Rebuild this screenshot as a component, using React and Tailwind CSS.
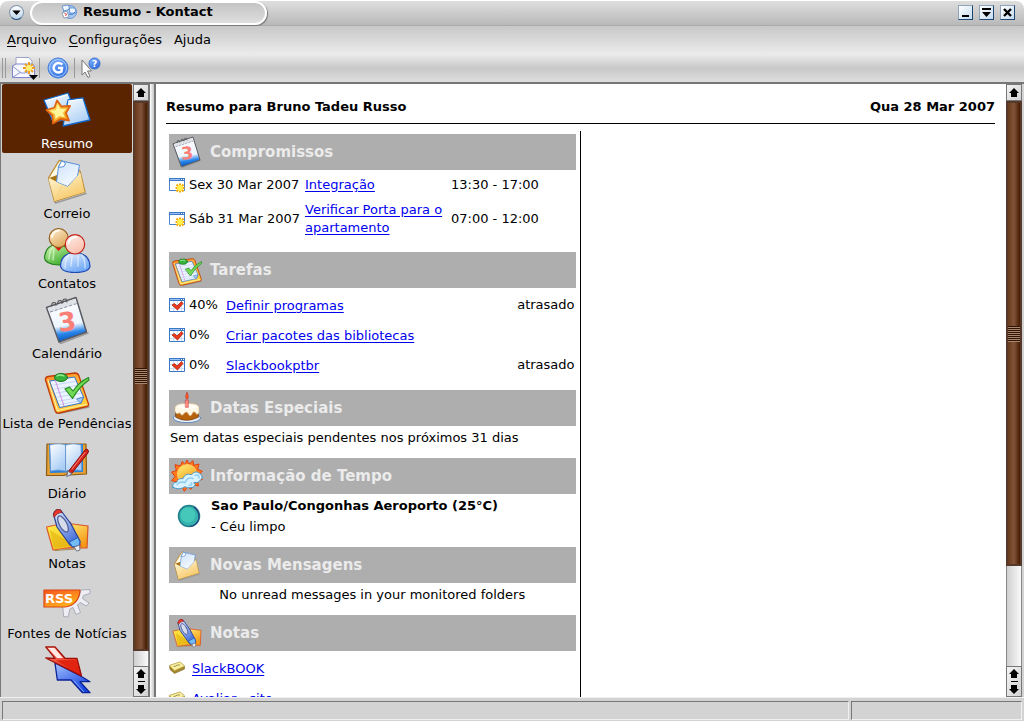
import React from 'react';

const stroke = (color, width = 1) => ({ stroke: color, strokeWidth: width, strokeLinejoin: 'round', strokeLinecap: 'round' });

function Gradients() {
  const list = [
    ['g-sky', '#ffffff', '#a9cdf5'],
    ['g-paper', '#cfe2fb', '#f4f9ff'],
    ['g-env', '#fffbe0', '#f7c765'],
    ['g-gold', '#fff27a', '#f59a17'],
    ['g-skinA', '#fff1d8', '#dfa95c'],
    ['g-skinB', '#fff1ea', '#f9bfae'],
    ['g-green', '#d5f8b8', '#3fae2c'],
    ['g-blue', '#f1f8ff', '#6da7f5'],
    ['g-board', '#ff8a2a', '#ffd23c'],
    ['g-yellow', '#fff04a', '#f3bd1f'],
    ['g-orange', '#f6531f', '#ffb21c'],
    ['g-red', '#ff8d7a', '#dd1503'],
    ['g-arrow', '#a9c4ff', '#1746e0'],
    ['g-pen', '#e9f3ff', '#3d68d8'],
    ['g-google', '#8ab8ff', '#2f6fe0'],
  ];
  return (
    <svg className="absolute size-0" aria-hidden="true">
      <defs>
        {list.map(([id, a, b]) => (
          <linearGradient key={id} id={id} x1="0" y1="0" x2="0.6" y2="1">
            <stop offset="0" stopColor={a} />
            <stop offset="1" stopColor={b} />
          </linearGradient>
        ))}
        <linearGradient id="g-cal" x1="0" y1="0" x2="0.15" y2="1">
          <stop offset="0" stopColor="#ffffff" />
          <stop offset="0.68" stopColor="#eef6ff" />
          <stop offset="0.86" stopColor="#2b86ea" />
          <stop offset="1" stopColor="#0a5fc8" />
        </linearGradient>
      </defs>
    </svg>
  );
}

function Icon({ className, children }) {
  return (
    <svg viewBox="0 0 48 48" fill="none" className={`shrink-0 ${className}`} aria-hidden="true">
      {children}
    </svg>
  );
}

function SummaryIcon({ className }) {
  return (
    <Icon className={className}>
      <path d="M1 14 L25 7 L27 12 L30 32 L10 36Z" fill="url(#g-sky)" {...stroke('#1268c8', 1.3)} />
      <path d="M2.5 15 L24 9" {...stroke('#fff', 1)} />
      <path d="M25 14 L40 12 L47 34 L20 40Z" fill="url(#g-sky)" {...stroke('#1268c8', 1.3)} />
      <path d="M25.5 15 L39 13.2" {...stroke('#fff', 1)} />
      <path d="M14 14.5 L18.5 20.5 L27 20 L23 27 L26 34.5 L17.5 33 L10 37.5 L9.5 29.5 L3.5 24 L11.5 21.5Z" fill="url(#g-gold)" {...stroke('#e0640f', 1.8)} />
      <path d="M14.5 18.500 L17.500 23 L23 23 L20 27 L22 31.500 L16.500 30 L12.500 33 L12 28 L7.500 25 L13 24Z" fill="#fff59a" />
    </Icon>
  );
}

function MailIcon({ className }) {
  return (
    <Icon className={className}>
      <path d="M6.500 23 L12.500 47 L43 37.500" {...stroke('#999', 1.500)} />
      <path d="M5.500 22 L15.500 5.500 Q17 3.500 19 5 L37 15 L42 36 L11.500 45.500Z" fill="url(#g-env)" {...stroke('#b98a35', 1.3)} />
      <path d="M7.500 20.500 L16.500 7 L19 9 L14 21Z" fill="#fffbe6" />
      <path d="M6.500 22 L14 19 L14 26Z" fill="#a77411" />
      <path d="M19 5 L36.500 9 L34.500 20 L24.500 30.500 L13.500 26 L15.500 11Z" fill="url(#g-paper)" {...stroke('#5a92dd', 1)} />
      <path d="M19 5 L22.500 7 L21 10.500 L15.500 11.500Z" fill="#fff" {...stroke('#5d93d8', 1)} />
      <path d="M5.500 22.500 L13.500 26 L24.500 31 L34.500 20 L37.500 17 L41.500 36 L11.500 45Z" fill="url(#g-env)" />
      <path d="M11.500 44.500 L19 30 M41 35.500 L29 27" {...stroke('#f4d489', 1)} />
    </Icon>
  );
}

function ContactsIcon({ className }) {
  return (
    <Icon className={className}>
      <path d="M1.500 32 Q2.500 19 14 18.500 Q27 19 28 32 Q28 39 15 39 Q2 38 1.500 32Z" fill="url(#g-green)" {...stroke('#23831b', 1.2)} />
      <path d="M6 33 Q6 25 10 21 M10 34 L11 23" opacity="0.6" {...stroke('#eaffdc', 1.500)} />
      <path d="M11.500 20.500 L15.500 25 L20 20.500Z" fill="#e01010" />
      <circle cx="15.700" cy="12" r="9.500" fill="url(#g-skinA)" {...stroke('#8d5a18', 1.100)} />
      <path d="M9 11 Q10 5 16 4.500" {...stroke('#fff9ec', 1.800)} />
      <path d="M17.500 40 Q18 27 32 26.500 Q46 27 47 40 Q46.500 46.500 32 46.500 Q18.500 46.500 17.500 40Z" fill="url(#g-blue)" {...stroke('#2049b2', 1.200)} />
      <path d="M22 42 Q22 33 26 29 M28 40 L29 30 M35 40 L35 30 M42 42 Q42 33 39 29" opacity="0.6" {...stroke('#f7fbff', 1.300)} />
      <circle cx="32" cy="18.300" r="9.700" fill="url(#g-skinB)" {...stroke('#c32218', 1.200)} />
      <path d="M25.500 17 Q27 11 33 11" {...stroke('#fff', 1.800)} />
    </Icon>
  );
}

function CalendarIcon({ className }) {
  return (
    <Icon className={className}>
      <path d="M5 13 L17.500 47.500 L45 37" {...stroke('#999', 1.500)} />
      <path d="M3.500 11.500 L33 1.500 L43.500 36 L16 46Z" fill="url(#g-cal)" {...stroke('#5a5a62', 1.500)} />
      <path d="M5 12 L32 3 L33.500 8 L6.500 17Z" fill="#dfe2e8" />
      <path d="M7 16 L34 7.500" stroke="#8c929b" strokeWidth="1" strokeDasharray="3 2" />
      <path d="M9 10 q-1 -4 3 -3.500 l1 3 M15 8 q-1 -4 3 -3.500 l1 3 M20 6.500 q-1 -4 3 -3.500 l1 3" {...stroke('#555', 1.100)} />
      <text x="15" y="35" transform="rotate(-6 23 26)" fontFamily="DejaVu Sans" fontWeight="bold" fontSize="26" fill="#f98078">3</text>
    </Icon>
  );
}

function TodoIcon({ className }) {
  return (
    <Icon className={className}>
      <path d="M4 15 L14 48 L46 41" {...stroke('#9a9a9a', 1.500)} />
      <path d="M2.500 14 Q2 11 5 10.500 L32 7 Q35 7 36 10 L45.500 38 Q46 40 43.500 40.500 L16 47 Q13 47.500 12 44.500Z" fill="url(#g-board)" {...stroke('#c23c09', 1.300)} />
      <path d="M5 14 L14.500 44.500 L43 38.500" {...stroke('#fff0a3', 1.200)} />
      <path d="M7 15 L31.500 11 L40.500 31 L38 37 L17 41.500Z" fill="#edf4ff" {...stroke('#3478cd', 1)} />
      <path d="M11 19 L32 15.500 M12 23 L34 19.500 M13.500 27 L35.500 23.500 M14.500 31 L37 27.500 M16 35 L38 31.500 M17 38.500 L36 35" {...stroke('#b5cef0', 0.800)} />
      <path d="M12.500 15 L21 40" {...stroke('#d88be8', 1)} />
      <path d="M34 33 L40.500 31 L38 37Z" fill="#a6c9f3" {...stroke('#3478cd', 0.800)} />
      <ellipse cx="18" cy="11.500" rx="6.500" ry="4" fill="#36b13b" {...stroke('#167422', 1)} />
      <path d="M14 10 Q17 8 21 10" {...stroke('#9aec94', 1.300)} />
      <path d="M22 23 L26.500 21 L30 25 Q36 16 45.500 11.500 L46 14 Q36 21 29.500 32.500Z" fill="#73d954" {...stroke('#1f8a1e', 1.100)} />
    </Icon>
  );
}

function JournalIcon({ className }) {
  return (
    <Icon className={className}>
      <path d="M4 8 L43 8 L43.500 38 L27 39 L24 38 L21 39.500 L3.500 39.500Z" fill="#e6a136" {...stroke('#8c5c16', 1.200)} />
      <path d="M6 8 L7 37 L23 36.500 L40 36 L40 8Z" fill="#2b83dd" />
      <path d="M7 9 Q16 6.500 22.500 9 L22.500 35 Q15 33 8 35Z" fill="url(#g-sky)" {...stroke('#6c9cd1', 0.800)} />
      <path d="M23 9 Q30 6.500 38 9 L38.500 34.500 Q30 33 23 35Z" fill="url(#g-sky)" {...stroke('#6c9cd1', 0.800)} />
      <path d="M25 36 L42 14 Q44 12 45.500 14.500 L45 17 L29 37Z" fill="#d7201b" {...stroke('#85120f', 1)} />
      <path d="M29 33 L42 16.500" {...stroke('#ff8a7a', 1)} />
      <path d="M25 35 L29 38 L24 40.500Z" fill="#d9dbe5" {...stroke('#6b6f80', 1)} />
    </Icon>
  );
}

function NotesIcon({ className }) {
  return (
    <Icon className={className}>
      <path d="M18 42 L22 17 L45 20 L44 42Z" fill="url(#g-gold)" {...stroke('#d7542a', 1.200)} />
      <path d="M3.500 21 L27 16 L38 40 L10 44Z" fill="url(#g-yellow)" {...stroke('#dd5b2c', 1.200)} />
      <path d="M7 24 L26 36 L34 39 L11 42Z" fill="#dcae08" opacity="0.5" />
      <path d="M12 44.500 L33 43" {...stroke('#a08a4a', 1)} />
      <path d="M10.500 8 Q12.500 2 17.500 4 L28 18 L37 35 L36.500 39 L30.500 41 L27 39 L14 21Z" fill="url(#g-pen)" {...stroke('#293f95', 1.200)} />
      <path d="M10.500 8.500 Q12 2 17.500 4 L19 6.500 Q14 6.500 11.500 11Z" fill="#ec372b" {...stroke('#97201c', 0.900)} />
      <ellipse cx="20" cy="18" rx="3.700" ry="9" transform="rotate(-28 20 18)" fill="#d7dced" {...stroke('#4f5e96', 1.300)} />
      <path d="M26.500 36 L35 31.500 L37 36 L36 39.500 L30 41Z" fill="#72bdf8" {...stroke('#2a59b5', 1)} />
      <path d="M31.500 41 L36.500 39 L37 44 L34 45Z" fill="#eceff6" {...stroke('#778', 1)} />
    </Icon>
  );
}

function RssIcon({ className }) {
  return (
    <Icon className={className}>
      <path d="M20 30 Q36 29 38 14 L47 13.500 L47 17.500 L40.500 19.500 L39.500 22.500 L46 27 L43.500 30 L37 26.500 L34.500 29 L37.500 36.500 L33 38.500 L30 31.500 L27 33 L25 41 L20.500 40.500 L20 33Z" fill="#eeeef4" {...stroke('#a9acb8', 1)} />
      <path d="M1 14 H37 Q36 29 22 31 H1Z" fill="url(#g-orange)" {...stroke('#d94614', 1.200)} />
      <text x="2" y="26.500" fontFamily="DejaVu Sans" fontWeight="bold" fontSize="13" fill="#fff">RSS</text>
    </Icon>
  );
}

function SyncIcon({ className }) {
  return (
    <Icon className={className}>
      <path d="M12 17 L38.500 30.500 L47 35.700 L37 35.700 L47 46.700 L39.500 46.700 L28 34 L14.300 34Z" fill="url(#g-arrow)" {...stroke('#0b2296', 1.300)} />
      <path d="M31 35 L40.500 45.500" {...stroke('#8cacff', 1)} />
      <path d="M2.700 0.900 L12 0.900 L22 12.300 L34 12.300 L38.500 30 L2.700 12 L12 12.300Z" fill="url(#g-red)" {...stroke('#9e0d08', 1.300)} />
      <path d="M5 2 L11.300 2 L20 12 L14 12Z" fill="#ffe8e4" />
      <path d="M13 14.500 L33 14 L37 28Z" fill="#e02410" />
    </Icon>
  );
}

function CakeIcon({ className }) {
  return (
    <Icon className={className}>
      <ellipse cx="24" cy="39" rx="20.500" ry="7" fill="#e9f3ff" {...stroke('#4777b5', 1.200)} />
      <path d="M7 23 L7 38 Q23 47 41 38 L41 23Z" fill="#b8610d" {...stroke('#754009', 1.100)} />
      <path d="M6 23 Q7 17 24 17 Q41 17 42 23 L42 31 Q39 36 36 30 Q33 28 31 34 Q28 38 25 31 Q22 28 19 33 Q16 37 13 31 Q8 35 6 29Z" fill="#fff7e5" {...stroke('#cfb890', 1)} />
      <ellipse cx="24" cy="22" rx="15" ry="3.500" fill="#fffdf5" />
      <path d="M22 12 H26 V23 H22Z" fill="#ff8c80" {...stroke('#c43631', 0.800)} />
      <path d="M24 1 Q28 8 24 11 Q20 8 24 1Z" fill="#ff6426" {...stroke('#cc2419', 1)} />
    </Icon>
  );
}

function WeatherIcon({ className }) {
  return (
    <Icon className={className}>
      <path d="M24 0 L27 6 L33 1 L34 8 L42 6 L40 14 L47 17 L42 22 L47 29 L40 31 L41 39 L34 37 L30 44 L25 40 L20 47 L16 39 L8 42 L9 33 L1 31 L6 25 L1 18 L8 16 L6 7 L14 9 L17 2 L21 7Z" fill="#ff7a1c" {...stroke('#e23c08', 1.400)} />
      <circle cx="24" cy="21" r="14" fill="url(#g-gold)" {...stroke('#ffce65', 2)} />
      <path d="M3 41 Q1 34 9 33 Q10 27 18 28 Q21 19 31 22 Q36 15 43 20 Q50 26 44 30 Q42 35 34 34 Q39 37 33 41 Q24 43 21 40 Q12 46 3 41Z" fill="#d9f2ff" {...stroke('#3a93c8', 1.300)} />
      <path d="M9 37 Q14 31 21 34 Q25 24 33 28 M27 38 Q34 38 30 34 M36 23 Q43 21 42 27" {...stroke('#86cbed', 2)} />
    </Icon>
  );
}

function EventIcon() {
  return (
    <svg viewBox="0 0 16 16" className="size-4" aria-hidden="true">
      <path d="M0.500 1.500 H15.500 V13.500 H0.500Z" fill="#fff" stroke="#4c82cb" />
      <path d="M0 1 H16 V4 H0Z" fill="#3c78c8" />
      <path d="M1 2.500 H11" stroke="#9cc3f4" />
      <path d="M12 2.500 H13 M14 2.500 H15" stroke="#fff" />
      <path d="M11 6.500 V15.500 M6.500 11 H15.500 M7.500 7.500 L14.500 14.500 M14.500 7.500 L7.500 14.500" stroke="#f2a80c" strokeWidth="2" />
      <circle cx="11" cy="11" r="3" fill="#fff04a" />
    </svg>
  );
}

function TaskIcon() {
  return (
    <svg viewBox="0 0 16 16" className="size-4" aria-hidden="true">
      <path d="M0.500 1.500 H15.500 V14.500 H0.500Z" fill="#fff" stroke="#3c78c8" />
      <path d="M0 1 H16 V4 H0Z" fill="#3c78c8" />
      <path d="M1 2.500 H11" stroke="#9cc3f4" />
      <path d="M12 2.500 H13 M14 2.500 H15" stroke="#fff" />
      <path d="M4.500 4 V14 M8.500 4 V14 M12.500 4 V14 M1 7.500 H15 M1 11.500 H15" stroke="#cfdff3" />
      <path d="M3 8 L5.500 6.500 L8 9 L12.500 4.500 L14 6.500 L8.500 13Z" fill="#ea3a1c" stroke="#b82410" strokeWidth="0.800" />
    </svg>
  );
}

function StickyIcon() {
  return (
    <svg viewBox="0 0 16 16" className="size-4 shrink-0" aria-hidden="true">
      <path d="M0.500 4.500 L11 1 L15.500 5 L15.500 8 L5.500 12.500 L1 8.500Z" fill="#a5872c" stroke="#7d6824" strokeWidth="0.600" />
      <path d="M0.500 4.500 L11 1 L15.500 5 L5.500 9.500Z" fill="#f8f0a0" stroke="#cdb958" strokeWidth="0.600" />
      <path d="M4.500 5.500 L7 5 L8 4 L11 4" stroke="#9b935a" fill="none" />
    </svg>
  );
}

const sidebarItems = [
  ['Resumo', SummaryIcon],
  ['Correio', MailIcon],
  ['Contatos', ContactsIcon],
  ['Calendário', CalendarIcon],
  ['Lista de Pendências', TodoIcon],
  ['Diário', JournalIcon],
  ['Notas', NotesIcon],
  ['Fontes de Notícias', RssIcon],
  ['', SyncIcon],
];

function TitleBar() {
  const control = 'flex size-[15px] items-center justify-center border border-[#8fa3bb] border-r-[#1d4672] border-b-[#1d4672] bg-linear-to-br from-white to-[#c5dcf0]';
  return (
    <header className="shrink-0 bg-white pt-px">
      <div className="flex h-[25px] items-start rounded-t-lg border-b border-[#aaa] bg-linear-to-b from-[#dedede] to-[#b9b9b9] px-[9px]">
        <button type="button" aria-label="Menu da janela" className="mt-1 flex size-[15px] items-center justify-center rounded-full border border-[#8296ad] border-b-[#1d4672] bg-linear-to-b from-white to-[#bcd5ec]">
          <svg viewBox="0 0 10 6" className="h-[5px] w-[9px]" aria-hidden="true"><path d="M0 0.500 H10 L5 6Z" /></svg>
        </button>
        <div className="ml-1.5 flex h-[24px] w-[237px] items-center rounded-full border-2 border-white bg-linear-to-b from-[#c4c4c4] to-[#dedede] pb-0.5 pl-[29px] shadow-[1px_1px_1px_#777]">
          <svg viewBox="0 0 16 16" className="mr-1.5 size-4" aria-hidden="true">
            <circle cx="9" cy="8" r="6.500" fill="#a8c9f2" stroke="#6b96d4" />
            <path d="M1 2 L7 1 L9 5 L3 7Z M8 4 L14 4 L15 9 L9 9Z" fill="#eff6ff" stroke="#5688ca" strokeWidth="0.800" />
            <path d="M1 9 L6 7 L8 13 L3 14Z" fill="#fff" stroke="#788ba5" strokeWidth="0.800" />
            <path d="M3.500 9.500 L5.500 10 L4.500 12" stroke="#e44" fill="none" />
            <path d="M8 10 Q12 12 14 8" stroke="#3d78cd" fill="none" />
          </svg>
          <h1 className="text-[13px] leading-5 font-bold">Resumo - Kontact</h1>
        </div>
        <div className="mt-1 ml-auto flex gap-1.5">
          <button type="button" aria-label="Minimizar" className={control}>
            <svg viewBox="0 0 13 13" className="size-[13px]" aria-hidden="true"><path d="M3 9 H10 V11 H3Z" /></svg>
          </button>
          <button type="button" aria-label="Maximizar" className={control}>
            <svg viewBox="0 0 13 13" className="size-[13px]" aria-hidden="true"><path d="M2 2 H11 V4 H2Z M2 6 H11 L6.500 11Z" /></svg>
          </button>
          <button type="button" aria-label="Fechar" className={control}>
            <svg viewBox="0 0 13 13" className="size-[13px]" aria-hidden="true"><path d="M3 3 L10 10 M10 3 L3 10" stroke="#000" strokeWidth="2.400" /></svg>
          </button>
        </div>
      </div>
    </header>
  );
}

function MenuBar() {
  return (
    <nav className="flex h-7 shrink-0 items-center gap-3 bg-linear-to-b from-[#c8c8c8] to-[#ebebeb] pl-[7px]">
      <button type="button"><u className="underline-offset-2">A</u>rquivo</button>
      <button type="button"><u className="underline-offset-2">C</u>onfigurações</button>
      <button type="button">Ajuda</button>
    </nav>
  );
}

function ToolBar() {
  return (
    <div className="flex h-[30px] shrink-0 items-center border-b-2 border-[#777] bg-linear-to-b from-[#ececec] via-[#c8c8c8] to-[#dedede]">
      <div className="ml-0.5 flex gap-0.5" aria-hidden="true">
        <i className="h-5 w-px bg-[#999]" />
        <i className="h-5 w-px bg-[#999]" />
      </div>
      <button type="button" aria-label="Novo" className="ml-1.5">
        <svg viewBox="0 0 26 24" className="h-6 w-[26px]" aria-hidden="true">
          <path d="M4 1.500 H17 L20 5 V16 H4Z" fill="#fff" stroke="#9aa4c8" />
          <path d="M0.500 10 L4 8 H20 L22.500 10 V21.500 H0.500Z" fill="#f6f7ff" stroke="#7f87cc" />
          <path d="M1 10.500 L9 17 H13 L22 10.500 M1 21 L9 16 M22 21 L14 16" fill="none" stroke="#8f98d4" />
          <path d="M17 6 V18 M11 12 H23 M13 8 L21 16 M21 8 L13 16" stroke="#ee9f1c" strokeWidth="2" />
          <circle cx="17" cy="12" r="3" fill="#fff27c" />
          <path d="M17 19 H26 L21.500 24Z" fill="#000" />
        </svg>
      </button>
      <i className="ml-px h-5 w-px bg-[#999]" />
      <button type="button" aria-label="Google" className="ml-[7px]">
        <svg viewBox="0 0 22 22" className="size-[22px]" aria-hidden="true">
          <circle cx="11" cy="11" r="10" fill="url(#g-google)" stroke="#477fd5" />
          <circle cx="11" cy="11" r="8.500" fill="none" stroke="#a9cbff" />
          <path d="M15.500 7.500 Q11 4.500 8 7.500 Q5.500 10.500 7.500 13.500 Q10.500 17 14.500 14.500 L15 11 H11" fill="none" stroke="#fff" strokeWidth="2.400" />
        </svg>
      </button>
      <i className="ml-[5px] h-5 w-px bg-[#999]" />
      <button type="button" aria-label="O que é isto?" className="ml-1.5 pb-0.5">
        <svg viewBox="0 0 20 22" className="h-[22px] w-5" aria-hidden="true">
          <path d="M1 4 V19 L4 16 L7 21.500 L9 20.500 L6.500 15 H10.500Z" fill="#fff" stroke="#777" />
          <circle cx="13.500" cy="7.500" r="5.500" fill="url(#g-google)" stroke="#3a71ce" />
          <text x="11" y="11" fontFamily="DejaVu Sans" fontSize="9" fontWeight="bold" fill="#fff">?</text>
        </svg>
      </button>
    </div>
  );
}

const arrowUp = 'M5 0 L10 5 H8 V9 H2 V5 H0Z';
const arrowDown = 'M5 9 L10 4 H8 V0 H2 V4 H0Z';

function ScrollBar({ thumb }) {
  const face = 'border border-[#777] bg-linear-to-br from-[#f4f4f4] to-[#d2d2d2]';
  return (
    <div className="flex w-4 shrink-0 flex-col border-x border-[#888] bg-linear-to-r from-[#cfcfcf] to-[#fafafa]">
      <button type="button" aria-label="Rolar para cima" className={`-mx-px flex h-[17px] shrink-0 items-center justify-center ${face}`}>
        <svg viewBox="0 0 10 9" className="h-[9px] w-2.5" aria-hidden="true"><path d={arrowUp} /></svg>
      </button>
      <div className="min-h-0 flex-1">
        <div className={`-mx-px flex flex-col justify-center border-2 border-[#56392a] bg-linear-to-r from-[#6a3a1c] via-[#83543a] to-[#431b00] ${thumb}`}>
          <div className="h-4 bg-[repeating-linear-gradient(to_bottom,#2f1400_0px,#2f1400_1px,#a88670_1px,#a88670_2px)]" />
        </div>
      </div>
      <div className={`-mx-px flex h-[31px] shrink-0 flex-col items-center justify-center gap-[3px] ${face}`}>
        <button type="button" aria-label="Rolar para cima">
          <svg viewBox="0 0 10 9" className="h-[9px] w-2.5" aria-hidden="true"><path d={arrowUp} /></svg>
        </button>
        <i className="h-px w-[7px] bg-black" />
        <button type="button" aria-label="Rolar para baixo">
          <svg viewBox="0 0 10 9" className="h-[9px] w-2.5" aria-hidden="true"><path d={arrowDown} /></svg>
        </button>
      </div>
    </div>
  );
}

function SideBar() {
  return (
    <aside className="flex shrink-0 border-l border-[#777] bg-[#d3d3d3]">
      <nav className="w-[132px] overflow-hidden px-px">
        {sidebarItems.map(([label, Glyph], i) => (
          <button key={i} type="button" aria-label={label || 'Sincronizar'} className={`mb-px flex h-[69px] w-full flex-col items-center gap-px rounded-xs pt-0.5 leading-[18px] whitespace-nowrap ${i === 0 ? 'bg-[#5a2400] text-white' : ''}`}>
            <Glyph className="size-12" />
            {label}
          </button>
        ))}
      </nav>
      <ScrollBar thumb="h-37/38" />
    </aside>
  );
}

function Section({ title, glyph: Glyph, className, children }) {
  return (
    <section className={className}>
      <h3 className="flex h-9 items-center gap-[7px] bg-[#aeaeae] pl-0.5 text-[15px] font-bold text-[#ebebeb]">
        <Glyph className="size-8" />
        {title}
      </h3>
      {children}
    </section>
  );
}

function Link({ children }) {
  return <a href="#" className="text-[#0000ee] underline underline-offset-2">{children}</a>;
}

const appointments = [
  ['Sex 30 Mar 2007', 'Integração', '13:30 - 17:00', 'h-[29px]'],
  ['Sáb 31 Mar 2007', 'Verificar Porta para o apartamento', '07:00 - 12:00', 'h-10'],
];

const tasks = [
  ['40%', 'Definir programas', 'atrasado'],
  ['0%', 'Criar pacotes das bibliotecas', ''],
  ['0%', 'Slackbookptbr', 'atrasado'],
];

function Summary() {
  return (
    <main className="flex min-w-0 flex-1 flex-col overflow-hidden bg-white pr-[11px] pl-2.5">
      <div className="flex h-10 shrink-0 items-center justify-between border-b border-black pt-1.5 font-bold">
        <h2>Resumo para Bruno Tadeu Russo</h2>
        <span>Qua 28 Mar 2007</span>
      </div>
      <div className="mt-[7px] grid min-h-0 flex-1 grid-cols-2">
        <div className="min-h-0 overflow-hidden border-r border-black pt-[3px] pr-1 pl-[3px]">
          <Section title="Compromissos" glyph={CalendarIcon} className="h-[118px]">
            <table className="w-full leading-[18px]">
              <tbody>
                {appointments.map(([date, title, time, height]) => (
                  <tr key={date} className={height}>
                    <td className="w-5"><EventIcon /></td>
                    <td className="w-[116px] whitespace-nowrap">{date}</td>
                    <td className="w-[146px] pr-1"><Link>{title}</Link></td>
                    <td className="whitespace-nowrap">{time}</td>
                  </tr>
                ))}
              </tbody>
            </table>
          </Section>
          <Section title="Tarefas" glyph={TodoIcon} className="h-[138px]">
            <table className="mt-0.5 w-full leading-[18px]">
              <tbody>
                {tasks.map(([percent, title, status]) => (
                  <tr key={title} className="h-[30px]">
                    <td className="w-5"><TaskIcon /></td>
                    <td className="w-[37px]">{percent}</td>
                    <td className="pt-0.5"><Link>{title}</Link></td>
                    <td className="pr-px text-right">{status}</td>
                  </tr>
                ))}
              </tbody>
            </table>
          </Section>
          <Section title="Datas Especiais" glyph={CakeIcon} className="h-[68px]">
            <p className="pt-[3px] pl-px leading-[18px]">Sem datas especiais pendentes nos próximos 31 dias</p>
          </Section>
          <Section title="Informação de Tempo" glyph={WeatherIcon} className="h-[89px]">
            <div className="flex items-center gap-2.5 pt-px pl-2">
              <svg viewBox="0 0 24 24" className="size-6" aria-hidden="true">
                <circle cx="12" cy="12" r="10.500" fill="#35b3ac" stroke="#1f7f8c" strokeWidth="1.500" />
                <path d="M17 3 Q24 9 21 17 Q18 22 13 22.500" fill="none" stroke="#2a3f80" strokeWidth="1.200" />
                <circle cx="11" cy="11" r="7.500" fill="#45c8ba" />
              </svg>
              <div className="leading-[21px]">
                <p className="font-bold">Sao Paulo/Congonhas Aeroporto (25°C)</p>
                <p>- Céu limpo</p>
              </div>
            </div>
          </Section>
          <Section title="Novas Mensagens" glyph={MailIcon} className="h-[68px]">
            <p className="pt-[3px] text-center leading-[18px]">No unread messages in your monitored folders</p>
          </Section>
          <Section title="Notas" glyph={NotesIcon}>
            <ul className="pt-[3px]">
              {['SlackBOOK', 'Avaliar - site'].map((note) => (
                <li key={note} className="flex h-[30px] items-center gap-[7px]">
                  <StickyIcon />
                  <Link>{note}</Link>
                </li>
              ))}
            </ul>
          </Section>
        </div>
        <div />
      </div>
    </main>
  );
}

export default function App() {
  return (
    <div className="flex h-screen flex-col overflow-hidden bg-[#d3d3d3] font-['DejaVu_Sans',sans-serif] text-[13px] text-black">
      <Gradients />
      <TitleBar />
      <MenuBar />
      <ToolBar />
      <div className="flex min-h-0 flex-1 pr-0.5">
        <SideBar />
        <div className="w-[7px] shrink-0 border-r-2 border-l border-[#777] bg-linear-to-r from-white to-[#c4c4c4]" />
        <Summary />
        <ScrollBar thumb="h-14/17" />
      </div>
      <footer className="flex h-6 shrink-0 gap-0.5 border-t border-[#f0f0f0] pt-[3px] pr-0.5 pb-px pl-0.5">
        <div className="flex-1 border border-[#777] border-r-[#f0f0f0] border-b-[#f0f0f0]" />
        <div className="w-[171px] border border-[#777] border-r-[#f0f0f0] border-b-[#f0f0f0]" />
      </footer>
    </div>
  );
}
